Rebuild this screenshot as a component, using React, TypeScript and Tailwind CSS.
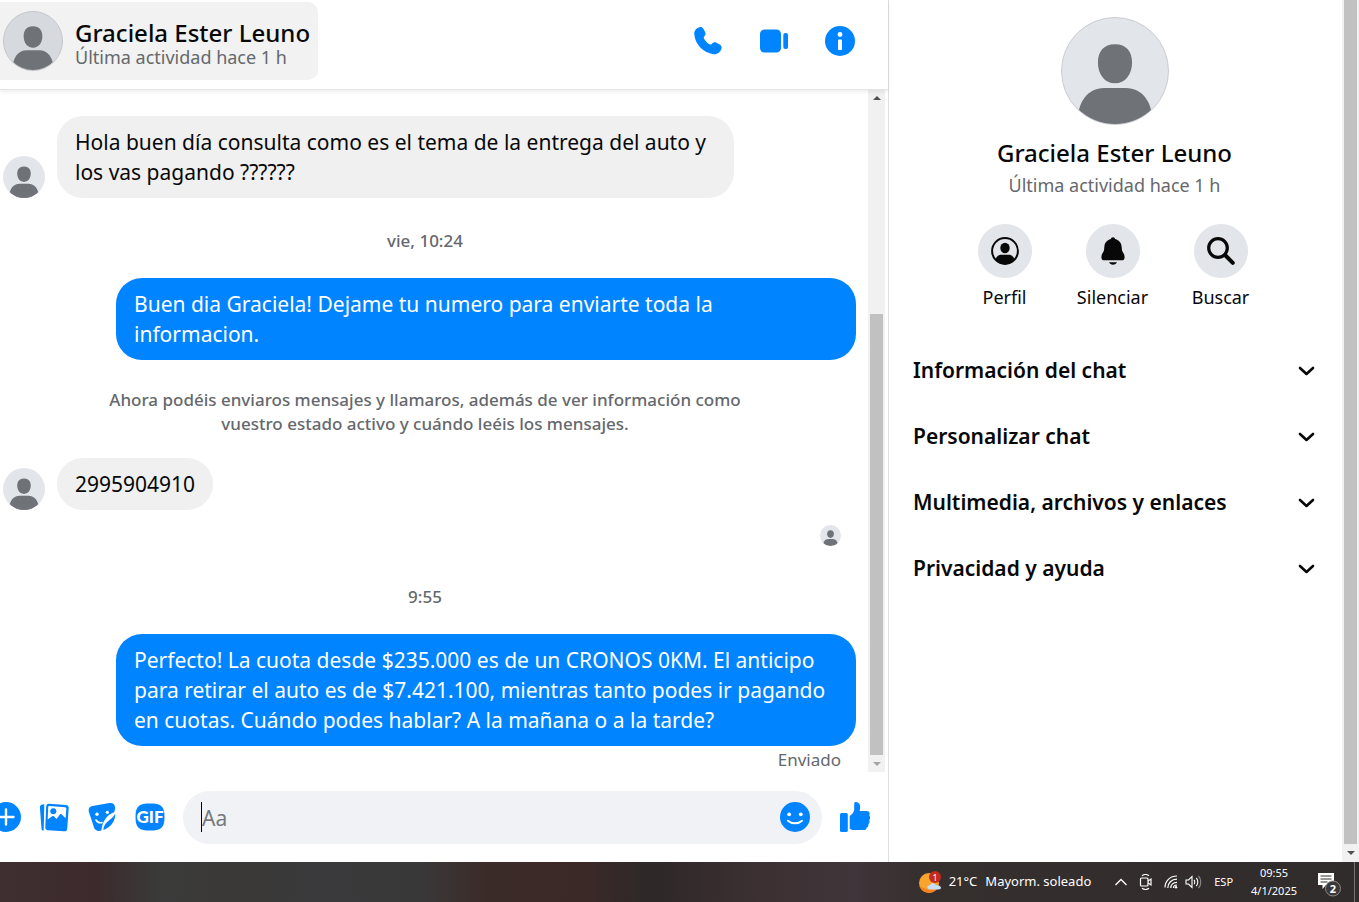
import React from "react";

type IconProps = { className?: string };

const sections = ["Información del chat", "Personalizar chat", "Multimedia, archivos y enlaces", "Privacidad y ayuda"];

function Avatar({ className = "" }: IconProps) {
  return (
    <svg viewBox="0 0 36 36" aria-hidden="true" className={"shrink-0 rounded-full text-[#6f7277] " + className}>
      <path d="M18 8.9c3.900 0 5.800 2.500 5.800 6.200 0 4-2.300 7.100-5.800 7.100s-5.800-3.100-5.800-7.100c0-3.700 1.900-6.200 5.800-6.200z" fill="currentColor" />
      <path d="M5.400 36c-.4-7.500 3.400-12.200 8.900-12.200h7.400c5.500 0 9.300 4.700 8.900 12.200z" fill="currentColor" />
    </svg>
  );
}

function PhoneIcon() {
  return (
    <svg viewBox="0 0 30 30" className="size-[30px]" fill="currentColor" aria-hidden="true">
      <path d="M6.500 1.200c1.500-.4 3 .2 3.800 1.500l1.700 3c.9 1.700.5 3.300-.6 4.500-.8.800-.8 1.600-.3 2.500 1.200 2.200 3 4.200 5.300 5.600.9.500 1.700.4 2.400-.4 1.200-1.500 2.900-2 4.600-1.100l3.300 1.700c1.600.8 2.200 2.400 1.800 4-.9 3.700-4.200 6.100-8 5.700C10.500 27 2.300 18.700 1.300 8.600.9 5 3 2.100 6.500 1.200z" />
    </svg>
  );
}

function VideoIcon() {
  return (
    <svg viewBox="0 0 30 30" className="size-[30px]" fill="currentColor" aria-hidden="true">
      <rect x="1" y="3.500" width="21" height="23" rx="4.500" />
      <rect x="24.300" y="7" width="4.700" height="16" rx="2" />
    </svg>
  );
}

function InfoIcon() {
  return (
    <svg viewBox="0 0 30 30" className="size-[30px]" aria-hidden="true">
      <circle cx="15" cy="15" r="15" fill="currentColor" />
      <circle cx="15" cy="8.500" r="2.400" fill="#fff" />
      <rect x="13" y="13.500" width="4" height="10.500" rx="1" fill="#fff" />
    </svg>
  );
}

function PlusIcon() {
  return (
    <svg viewBox="0 0 30 30" className="size-[30px]" aria-hidden="true">
      <circle cx="15" cy="15" r="15" fill="currentColor" />
      <path d="M15 7.500v15M7.500 15h15" stroke="#fff" strokeWidth="2.400" strokeLinecap="round" />
    </svg>
  );
}

function PhotosIcon() {
  return (
    <svg viewBox="0 0 30 30" className="size-[30px]" aria-hidden="true">
      <path d="M3.500 2.500 5.300 2.300 4.700 28.600c-1.200.1-2.100-.6-2.200-1.900L.9 5.400C.8 3.800 1.800 2.700 3.500 2.500z" fill="currentColor" />
      <path d="M10 1.700 27 3c1.800.2 2.900 1.400 2.700 3.200L28.200 26.700c-.1 1.800-1.300 2.700-3.100 2.600L8.900 28.200c-1.800-.1-2.700-1.300-2.600-3L7.200 4.300c.1-1.800 1.100-2.700 2.800-2.600z" fill="currentColor" />
      <path d="M10.500 4 26 5.200c.9.100 1.400.6 1.300 1.500l-.7 9.600-3.900-3.800c-.6-.6-1.200-.6-1.800 0L17.500 17l-2.400-2.600c-.6-.6-1.300-.6-1.900-.1l-4.500 3.200.5-12.300c0-.8.500-1.200 1.300-1.200z" fill="#fff" />
      <circle cx="14.300" cy="9.300" r="3" fill="currentColor" />
    </svg>
  );
}

function StickerIcon() {
  return (
    <svg viewBox="0 0 30 30" className="size-[30px]" aria-hidden="true">
      <path d="M5.500 3.900 22.500 1.100c3.200-.4 5.300 1 5.500 4.100.1 2-.2 3.700-1 5-7 2.700-11.700 8.500-12.600 18.300-3.300.9-6 .3-7.300-2.700L2.100 10.500C1 7.200 2.200 4.500 5.500 3.900z" fill="currentColor" />
      <path d="M28.300 11.500c.2 8-5.300 14.300-12 16.500.4-3 .9-4.600 2.500-6.600 3-3.400 7-4.800 9.500-9.900z" fill="currentColor" />
      <circle cx="10" cy="12.300" r="1.700" fill="#fff" />
      <circle cx="20.300" cy="10.300" r="1.600" fill="#fff" />
      <path d="M9 18c1.500 2.400 3.500 3.200 6 2.600" stroke="#fff" strokeWidth="1.600" fill="none" strokeLinecap="round" />
    </svg>
  );
}

function GifIcon() {
  return (
    <svg viewBox="0 0 30 30" className="size-[30px]" aria-hidden="true">
      <path d="M15 1.500c10.500 0 14.500 2 14.500 13.500S25.500 28.500 15 28.500.5 26.500.5 15 4.500 1.500 15 1.500z" fill="currentColor" />
      <text x="15" y="21" textAnchor="middle" fontSize="17" fontWeight="900" fill="#fff" fontFamily="Lato, sans-serif">GIF</text>
    </svg>
  );
}

function SmileIcon() {
  return (
    <svg viewBox="0 0 30 30" className="size-[30px]" aria-hidden="true">
      <circle cx="15" cy="15" r="15" fill="currentColor" />
      <circle cx="9.200" cy="12.300" r="1.900" fill="#fff" />
      <circle cx="20.800" cy="12.300" r="1.900" fill="#fff" />
      <path d="M8 18.800c3.500 3.300 10.500 3.300 14 0" stroke="#fff" strokeWidth="2" fill="none" strokeLinecap="round" />
    </svg>
  );
}

function ThumbIcon() {
  return (
    <svg viewBox="0 0 30 30" className="size-[30px]" fill="currentColor" aria-hidden="true">
      <rect x="0" y="11" width="7.800" height="19" rx="1.600" />
      <path d="M14.200 1.500C14.300.5 15 0 16 0c2.700 0 4.200 2.200 4.200 5.200 0 1.500-.3 2.700-.6 3.900h7c2 0 3.100 1.200 3.100 2.700 0 .8-.2 1.300-.5 1.700 1.300 1.300 1.200 3.400 0 4.500.8 1.600.3 3.200-.9 4.100.4 1.800-.4 3.200-1.700 3.700-.2 1.500-1.200 2.300-2.800 2.300H14c-2 0-3-.4-4.300-1.600V14c2-1.500 4.100-3.400 4.500-6z" />
    </svg>
  );
}

function ProfileIcon() {
  return (
    <svg viewBox="0 0 28 28" className="size-7" aria-hidden="true">
      <circle cx="14" cy="14" r="12.900" fill="none" stroke="currentColor" strokeWidth="2" />
      <ellipse cx="14" cy="11" rx="4.700" ry="5.200" fill="currentColor" />
      <path d="M4.500 22.500c1.200-3.600 3.300-4.800 6-4.800h7c2.700 0 4.800 1.200 6 4.800C21 26 18 27 14 27s-7-1-9.500-4.500z" fill="currentColor" />
    </svg>
  );
}

function BellIcon() {
  return (
    <svg viewBox="0 0 28 28" className="size-7" fill="currentColor" aria-hidden="true">
      <path d="M14 .2c1.200 0 2 .8 2.200 1.900 4 1 6.300 4.100 6.500 8.200.1 2.300.3 4 1.500 5.500 1 1.400 1.400 2.900 1.400 4.700 0 1.900-1 2.800-2.600 2.800H5c-1.600 0-2.600-.9-2.600-2.800 0-1.800.4-3.300 1.400-4.700 1.200-1.500 1.400-3.200 1.500-5.500.2-4.100 2.500-7.200 6.500-8.200C12 1 12.800.2 14 .2z" />
      <path d="M10 25.300h8c-.7 1.600-2.200 2.400-4 2.400s-3.300-.8-4-2.400z" />
    </svg>
  );
}

function SearchIcon() {
  return (
    <svg viewBox="0 0 28 28" className="size-7" fill="none" stroke="currentColor" aria-hidden="true">
      <circle cx="11" cy="11" r="9.300" strokeWidth="3.200" />
      <path d="m18.500 18.500 7.300 7.300" strokeWidth="4" strokeLinecap="round" />
    </svg>
  );
}

function Chevron() {
  return (
    <svg viewBox="0 0 18 12" className="h-3 w-[18px] shrink-0" fill="none" stroke="currentColor" strokeWidth="2.600" strokeLinecap="round" strokeLinejoin="round" aria-hidden="true">
      <path d="m2 4 6.500 6L15 4" />
    </svg>
  );
}

function Arrow({ up = false }: { up?: boolean }) {
  return (
    <svg viewBox="0 0 8 4" className="h-1 w-2" fill="currentColor" aria-hidden="true">
      <path d={up ? "M0 4 4 0l4 4z" : "M0 0h8L4 4z"} />
    </svg>
  );
}

function Incoming({ children }: { children: React.ReactNode }) {
  return (
    <div className="flex items-end gap-3 pl-[3px]">
      <Avatar className="size-[42px] bg-[#e2e5ea]" />
      <p className="max-w-[677px] rounded-[26px] bg-[#f0f0f0] px-[18px] py-[11px] text-[21px] leading-[30px] text-[#080809]">{children}</p>
    </div>
  );
}

function Outgoing({ children }: { children: React.ReactNode }) {
  return (
    <p className="max-w-[740px] self-end rounded-[26px] bg-[#0084ff] px-[18px] py-[11px] text-[21px] leading-[30px] text-white">{children}</p>
  );
}

function Action({ label, children }: { label: string; children: React.ReactNode }) {
  return (
    <button type="button" className="flex w-[108px] flex-col items-center gap-[7px] text-[18px] leading-6">
      <span className="flex size-[54px] items-center justify-center rounded-full bg-[#e2e5e9]">{children}</span>
      {label}
    </button>
  );
}

function Taskbar() {
  return (
    <footer className="flex h-10 shrink-0 items-center whitespace-nowrap bg-[linear-gradient(90deg,#402f31_0%,#3c2a2c_7%,#3a3b3a_12%,#3b3937_17%,#3a3a3c_24%,#393838_31%,#3b2b28_36%,#3b2928_43%,#2e2828_48%,#3c3032_56%,#40353a_63%,#352f2e_68%,#302c2b_100%)] text-[13px] text-white">
      <button type="button" className="ml-auto flex items-center gap-2">
        <svg viewBox="0 0 22 22" className="size-[22px]" aria-hidden="true">
          <circle cx="10" cy="12" r="10" fill="#f7a52c" />
          <path d="M0.500 15a10 10 0 0 0 18 2C12 20 5 18 .5 15z" fill="#f58220" />
          <path d="M11 18.500c-3.500 0-3.500-4.500 0-4.300 1-2.800 5-2.500 5.800 0 6-.5 6.500 4.300 3 4.300z" fill="#c9dcf6" />
          <circle cx="16" cy="6" r="6" fill="#c42b1c" />
          <text x="16" y="9.500" textAnchor="middle" fontSize="9" fill="#fff">1</text>
        </svg>
        <span>21°C</span>
        <span>Mayorm. soleado</span>
      </button>
      <button type="button" aria-label="Iconos ocultos" className="ml-6">
        <svg viewBox="0 0 12 8" className="h-2 w-3" fill="none" stroke="currentColor" strokeWidth="1.300" aria-hidden="true"><path d="m.5 7 5.500-5.500L11.500 7" /></svg>
      </button>
      <svg viewBox="0 0 14 16" className="ml-3 h-4 w-3.5 shrink-0" fill="none" stroke="currentColor" strokeWidth="1.200" aria-hidden="true">
        <rect x="1.500" y="4" width="7.500" height="8" rx="1" />
        <path d="m9 7 3-2v6L9 9M3 1.700C5 .3 8 .3 10 1.700M3 14.300c2 1.400 5 1.400 7 0" />
      </svg>
      <svg viewBox="0 0 14 14" className="ml-[11px] size-3.5 shrink-0" fill="none" stroke="currentColor" strokeWidth="1.200" aria-hidden="true">
        <path d="M1 12.500C1 6 6 1 13 1M3.800 13C3.800 8 7.500 4.200 13 4.200M6.800 13c0-3.300 2.500-5.700 6.200-5.700M9.500 13c0-1.800 1.500-3 3.500-3" />
        <circle cx="12" cy="12.300" r="1.200" fill="currentColor" stroke="none" />
      </svg>
      <svg viewBox="0 0 17 14" className="ml-[7px] h-3.5 w-[17px] shrink-0" fill="none" stroke="currentColor" strokeWidth="1.100" aria-hidden="true">
        <path d="M1 5h2.500L7 1.500v11L3.500 9H1zM9 5c1 1 1 3 0 4M11.300 3c2 2 2 6 0 8" />
        <path d="M13.500 1c3 3 3 9 0 12" stroke="#8c8988" />
      </svg>
      <span className="ml-3 text-[11px]">ESP</span>
      <div className="ml-[18px] flex flex-col items-center text-[11px] leading-[18px]">
        <span>09:55</span>
        <span>4/1/2025</span>
      </div>
      <button type="button" aria-label="Notificaciones" className="ml-5 pt-1">
        <svg viewBox="0 0 24 26" className="h-[26px] w-6" aria-hidden="true">
          <path d="M1 2h16v12H9l-3.500 4V14H1z" fill="#fff" />
          <path d="M3.500 5h11M3.500 8h11M3.500 11h7" stroke="#322d2c" strokeWidth="1" />
          <circle cx="16" cy="17.500" r="7.500" fill="#3c3837" stroke="#8c8988" />
          <text x="16" y="21.500" textAnchor="middle" fontSize="11" fontWeight="700" fill="#fff">2</text>
        </svg>
      </button>
      <div className="ml-[13px] mr-1 h-10 w-px bg-[#777473]" />
    </footer>
  );
}

export default function App() {
  return (
    <div className="flex h-screen flex-col overflow-hidden bg-white font-['Noto_Sans','Open_Sans',sans-serif] text-[#080809]">
      <div className="flex min-h-0 flex-1">
        <main className="flex min-w-0 flex-1 flex-col">
          <header className="z-10 flex h-[90px] shrink-0 items-start justify-between border-b border-[#e4e4e4] pr-[33px] pt-0.5 shadow-[0_2px_4px_rgba(0,0,0,0.07)]">
            <button type="button" className="flex h-[78px] items-center gap-3 rounded-r-[10px] bg-[#f2f2f2] pl-[3px] pr-2 text-left">
              <Avatar className="size-[60px] border border-[#c4c7cb] bg-[#d6d9de]" />
              <span className="flex flex-col pt-2">
                <span className="text-[24px] font-medium leading-6">Graciela Ester Leuno</span>
                <span className="text-[18px] leading-6 text-[#65686c]">Última actividad hace 1 h</span>
              </span>
            </button>
            <div className="flex h-[78px] items-center gap-9 text-[#0084ff]">
              <button type="button" aria-label="Llamar"><PhoneIcon /></button>
              <button type="button" aria-label="Videollamada"><VideoIcon /></button>
              <button type="button" aria-label="Información"><InfoIcon /></button>
            </div>
          </header>

          <section className="flex min-h-0 flex-1 pr-[3px]">
            <div className="flex min-w-0 flex-1 flex-col overflow-hidden pr-3 pt-[26px]">
              <Incoming>Hola buen día consulta como es el tema de la entrega del auto y los vas pagando ??????</Incoming>
              <p className="pb-[25px] pr-1.5 pt-[31px] text-center text-[17px] font-medium leading-6 text-[#65686c]">vie, 10:24</p>
              <Outgoing>Buen dia Graciela! Dejame tu numero para enviarte toda la informacion.</Outgoing>
              <p className="mx-auto max-w-[668px] pb-[22px] pr-1.5 pt-7 text-center text-[17px] font-medium leading-6 text-[#65686c]">
                Ahora podéis enviaros mensajes y llamaros, además de ver información como vuestro estado activo y cuándo leéis los mensajes.
              </p>
              <Incoming>2995904910</Incoming>
              <div className="flex justify-end pr-[15px] pt-[15px]"><Avatar className="size-[21px] bg-[#e2e5ea]" /></div>
              <p className="pb-[25px] pr-1.5 pt-[39px] text-center text-[17px] font-medium leading-6 text-[#65686c]">9:55</p>
              <Outgoing>Perfecto! La cuota desde $235.000 es de un CRONOS 0KM. El anticipo para retirar el auto es de $7.421.100, mientras tanto podes ir pagando en cuotas. Cuándo podes hablar? A la mañana o a la tarde?</Outgoing>
              <p className="pr-[15px] pt-0.5 text-right text-[17px] leading-6 text-[#65686c]">Enviado</p>
            </div>
            <div className="flex w-[17px] flex-col items-center bg-[#f1f1f1]">
              <span className="flex h-4 shrink-0 items-center text-[#505050]"><Arrow up /></span>
              <div className="flex w-[13px] flex-1 flex-col justify-end"><div className="h-[68%] bg-[#c1c1c1]" /></div>
              <span className="flex h-[17px] shrink-0 items-center text-[#a3a3a3]"><Arrow /></span>
            </div>
          </section>

          <form className="flex h-[90px] shrink-0 items-center pr-[18px] text-[#0084ff]" onSubmit={(e) => e.preventDefault()}>
            <div className="-ml-[9px] flex gap-[18px]">
              <button type="button" aria-label="Más acciones"><PlusIcon /></button>
              <button type="button" aria-label="Adjuntar foto"><PhotosIcon /></button>
              <button type="button" aria-label="Elegir sticker"><StickerIcon /></button>
              <button type="button" aria-label="Elegir GIF"><GifIcon /></button>
            </div>
            <div className="ml-[18px] flex h-[53px] min-w-0 flex-1 items-center rounded-full bg-[#f0f2f5] pl-[18px] pr-3">
              <span className="h-[30px] w-px bg-black" />
              <input aria-label="Mensaje" placeholder="Aa" className="h-8 min-w-0 flex-1 bg-transparent pt-0.5 text-[21px] text-black outline-none placeholder:text-[#75787c]" />
              <button type="button" aria-label="Elegir emoji"><SmileIcon /></button>
            </div>
            <button type="button" aria-label="Me gusta" className="ml-[18px]"><ThumbIcon /></button>
          </form>
        </main>

        <aside className="flex w-[471px] shrink-0 border-l border-[#dedfe1]">
          <div className="flex min-w-0 flex-1 flex-col pl-6 pr-[26px]">
            <div className="flex flex-col items-center pt-[17px]">
              <Avatar className="size-[108px] border border-[#c9ccd1] bg-[#e2e5ea]" />
              <h1 className="pt-3 text-[24px] font-medium leading-8">Graciela Ester Leuno</h1>
              <p className="pt-0.5 text-[18px] leading-7 text-[#65686c]">Última actividad hace 1 h</p>
              <div className="flex pr-1 pt-[25px]">
                <Action label="Perfil"><ProfileIcon /></Action>
                <Action label="Silenciar"><BellIcon /></Action>
                <Action label="Buscar"><SearchIcon /></Action>
              </div>
            </div>
            <nav className="flex flex-col pt-7">
              {sections.map((label) => (
                <button type="button" key={label} className="flex h-[66px] items-center justify-between text-left text-[21px] font-semibold leading-[30px]">
                  {label}
                  <Chevron />
                </button>
              ))}
            </nav>
          </div>
          <div className="flex w-[17px] flex-col items-center bg-[#f1f1f1]">
            <div className="w-[13px] flex-1 bg-[#c1c1c1]" />
            <span className="flex h-[18px] shrink-0 items-center text-[#505050]"><Arrow /></span>
          </div>
        </aside>
      </div>
      <Taskbar />
    </div>
  );
}
